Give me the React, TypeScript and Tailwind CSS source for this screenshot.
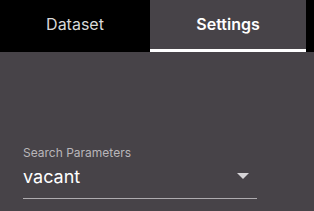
export default function App() {
  return (
    <div className="w-[314px] h-[211px] bg-[#474348] flex flex-col" style={{ fontFamily: '"Inter", "Noto Sans", sans-serif' }}>
      <div className="flex bg-black h-[52px]">
        <div className="w-[150px] flex items-center justify-center text-[16px] text-[#d9d9d9] pb-[4px]">
          Dataset
        </div>
        <div className="w-[156px] flex items-center justify-center bg-[#474348] border-b-[3px] border-white text-[16px] font-semibold text-white pb-[1px]">
          Settings
        </div>
      </div>
      <div className="pt-[93px] px-[23px]">
        <div className="w-[234px]">
          <div className="text-[12px] leading-[16px] text-[#b9b6ba]">Search Parameters</div>
          <div className="flex items-center justify-between h-[38px] border-b border-[#aeabaf]">
            <span className="text-[18px] text-white pb-[6px]">vacant</span>
            <svg width="12" height="7" viewBox="0 0 12 7" className="mr-[8px] mb-[6px]">
              <path d="M0 0 L12 0 L6 6 Z" fill="#d6d4d7" />
            </svg>
          </div>
        </div>
      </div>
    </div>
  );
}
